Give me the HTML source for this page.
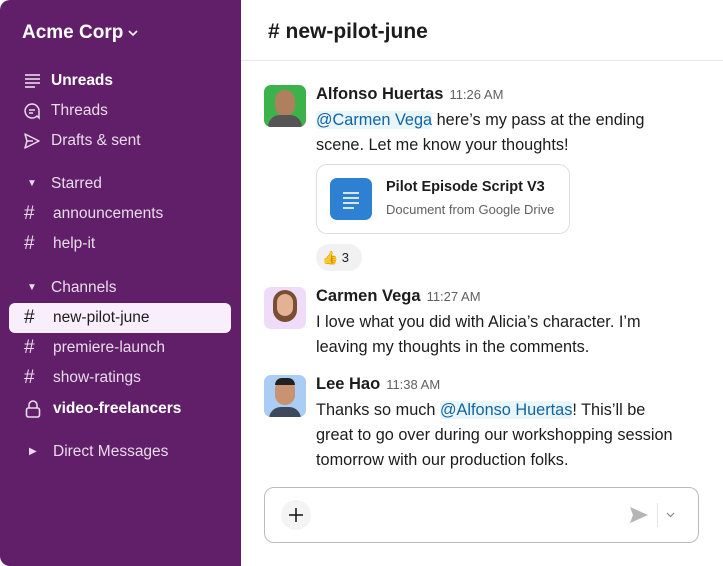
<!DOCTYPE html>
<html><head><meta charset="utf-8"><style>
*{margin:0;padding:0;box-sizing:border-box}
body{width:723px;height:566px;background:#fff;font-family:"Liberation Sans",sans-serif;position:relative;overflow:hidden;color:#1d1c1d}
.sb{position:absolute;left:0;top:0;width:241px;height:566px;background:#611f69;border-radius:10px 0 0 10px}
.a{position:absolute;white-space:nowrap}
.si{position:absolute;color:#e8dcea;font-size:15.5px;white-space:nowrap;line-height:20px}
.hash{position:absolute;left:24px;font-size:19px;color:#e8dcea;line-height:20px}
.hl{position:absolute;left:9px;top:303px;width:222px;height:30px;background:#f9eefc;border-radius:6px}
.name{font-weight:bold;font-size:16.5px}
.time{font-size:13px;color:#616061;margin-left:6px;font-weight:normal}
.msg{font-size:16.3px;line-height:25px;color:#1d1c1d}
.men{background:#e8f5fa;color:#1264a3;border-radius:3px}
.av{position:absolute;left:264px;width:42px;height:42px;border-radius:7px;overflow:hidden}
</style></head><body>
<div class="sb"></div>
<div class="a" style="left:22px;top:22px;color:#fff;font-weight:bold;font-size:19px">Acme Corp</div>
<svg class="a" style="left:128px;top:29px" width="10" height="8"><path d="M1 2L5 6L9 2" fill="none" stroke="#fff" stroke-width="1.6"/></svg>
<svg class="a" style="left:24px;top:73px" width="18" height="16"><g stroke="#e8dcea" stroke-width="1.6"><line x1="1" y1="2" x2="16" y2="2"/><line x1="1" y1="6" x2="16" y2="6"/><line x1="1" y1="10" x2="16" y2="10"/><line x1="1" y1="14" x2="11" y2="14"/></g></svg>
<div class="si" style="left:51px;top:71px;font-weight:bold;color:#fff">Unreads</div>
<svg class="a" style="left:23px;top:102px" width="18" height="18"><path d="M9 2a7 7 0 1 0 5 12l2 2v-7A7 7 0 0 0 9 2z" fill="none" stroke="#e8dcea" stroke-width="1.5"/><line x1="6" y1="8" x2="12" y2="8" stroke="#e8dcea" stroke-width="1.5"/><line x1="6" y1="11" x2="10" y2="11" stroke="#e8dcea" stroke-width="1.5"/></svg>
<div class="si" style="left:51px;top:101px">Threads</div>
<svg class="a" style="left:23px;top:132px" width="18" height="18"><path d="M2 2L16 9L2 16L4 9Z M4 9H10" fill="none" stroke="#e8dcea" stroke-width="1.5" stroke-linejoin="round"/></svg>
<div class="si" style="left:51px;top:131px">Drafts &amp; sent</div>
<div class="si" style="left:27px;top:174px;font-size:10px">&#9660;</div>
<div class="si" style="left:51px;top:174px">Starred</div>
<div class="hash" style="top:204px">#</div><div class="si" style="left:53px;top:204px">announcements</div>
<div class="hash" style="top:234px">#</div><div class="si" style="left:53px;top:234px">help-it</div>
<div class="si" style="left:27px;top:278px;font-size:10px">&#9660;</div>
<div class="si" style="left:51px;top:278px">Channels</div>
<div class="hl"></div>
<div class="hash" style="top:308px;color:#1d1c1d">#</div><div class="si" style="left:53px;top:308px;color:#1d1c1d">new-pilot-june</div>
<div class="hash" style="top:338px">#</div><div class="si" style="left:53px;top:338px">premiere-launch</div>
<div class="hash" style="top:368px">#</div><div class="si" style="left:53px;top:368px">show-ratings</div>
<svg class="a" style="left:25px;top:400px" width="16" height="18"><path d="M4 8V5a4 4 0 0 1 8 0v3" fill="none" stroke="#e8dcea" stroke-width="1.6"/><rect x="1.5" y="8" width="13" height="9" rx="2" fill="none" stroke="#e8dcea" stroke-width="1.6"/></svg>
<div class="si" style="left:53px;top:399px;font-weight:bold;color:#fff">video-freelancers</div>
<div class="si" style="left:29px;top:442px;font-size:10px">&#9654;</div>
<div class="si" style="left:53px;top:442px">Direct Messages</div>

<div class="a" style="left:268px;top:20px;font-size:21px;font-weight:bold">#&nbsp;new-pilot-june</div>
<div class="a" style="left:241px;top:60px;width:482px;height:1px;background:#e8e8e8"></div>

<div class="av" style="top:85px;background:#3cb24a"><div style="position:absolute;left:11px;top:5px;width:20px;height:26px;border-radius:10px;background:#b07f5e"></div><div style="position:absolute;left:4px;top:30px;width:34px;height:16px;border-radius:12px 12px 0 0;background:#555"></div></div>
<div class="a" style="left:316px;top:85px"><span class="name">Alfonso Huertas</span><span class="time">11:26 AM</span></div>
<div class="a msg" style="left:316px;top:108px"><span class="men">@Carmen Vega</span> here’s my pass at the ending<br>scene. Let me know your thoughts!</div>
<div class="a" style="left:316px;top:164px;width:254px;height:70px;border:1px solid #ddd;border-radius:11px"></div>
<div class="a" style="left:330px;top:178px;width:42px;height:42px;background:#2e80d3;border-radius:7px"><svg width="42" height="42"><g stroke="#fff" stroke-width="1.6"><line x1="13" y1="15" x2="29" y2="15"/><line x1="13" y1="20" x2="29" y2="20"/><line x1="13" y1="25" x2="29" y2="25"/><line x1="13" y1="30" x2="24" y2="30"/></g></svg></div>
<div class="a" style="left:386px;top:179px;font-size:14.5px;font-weight:bold">Pilot Episode Script V3</div>
<div class="a" style="left:386px;top:202px;font-size:13px;color:#616061">Document from Google Drive</div>
<div class="a" style="left:316px;top:244px;width:46px;height:27px;background:#f1f1f1;border-radius:14px;font-size:13px;line-height:27px;padding-left:6px">👍 3</div>

<div class="av" style="top:287px;background:#efdcf8"><div style="position:absolute;left:9px;top:3px;width:24px;height:32px;border-radius:12px;background:#7a4e33"></div><div style="position:absolute;left:13px;top:7px;width:16px;height:22px;border-radius:8px;background:#e3b295"></div></div>
<div class="a" style="left:316px;top:287px"><span class="name">Carmen Vega</span><span class="time">11:27 AM</span></div>
<div class="a msg" style="left:316px;top:310px">I love what you did with Alicia’s character. I’m<br>leaving my thoughts in the comments.</div>

<div class="av" style="top:375px;background:#a9cdf5"><div style="position:absolute;left:11px;top:4px;width:20px;height:26px;border-radius:10px;background:#c99270"></div><div style="position:absolute;left:11px;top:3px;width:20px;height:7px;border-radius:8px 8px 0 0;background:#222"></div><div style="position:absolute;left:5px;top:32px;width:32px;height:14px;border-radius:12px 12px 0 0;background:#3c4a5c"></div></div>
<div class="a" style="left:316px;top:375px"><span class="name">Lee Hao</span><span class="time">11:38 AM</span></div>
<div class="a msg" style="left:316px;top:398px">Thanks so much <span class="men">@Alfonso Huertas</span>! This’ll be<br>great to go over during our workshopping session<br>tomorrow with our production folks.</div>

<div class="a" style="left:264px;top:487px;width:435px;height:56px;border:1px solid #bbb;border-radius:10px"></div>
<div class="a" style="left:281px;top:500px;width:30px;height:30px;border-radius:15px;background:#f4f4f4"><svg width="30" height="30"><g stroke="#1d1c1d" stroke-width="1.6"><line x1="15" y1="8" x2="15" y2="22"/><line x1="8" y1="15" x2="22" y2="15"/></g></svg></div>
<svg class="a" style="left:629px;top:506px" width="20" height="18"><path d="M1 1L19 9L1 17L4 9Z" fill="#b5b5b5"/></svg>
<div class="a" style="left:657px;top:503px;width:1px;height:24px;background:#e5e5e5"></div>
<svg class="a" style="left:666px;top:512px" width="9" height="6"><path d="M1 1L4.5 4.5L8 1" fill="none" stroke="#888" stroke-width="1.2"/></svg>
</body></html>
